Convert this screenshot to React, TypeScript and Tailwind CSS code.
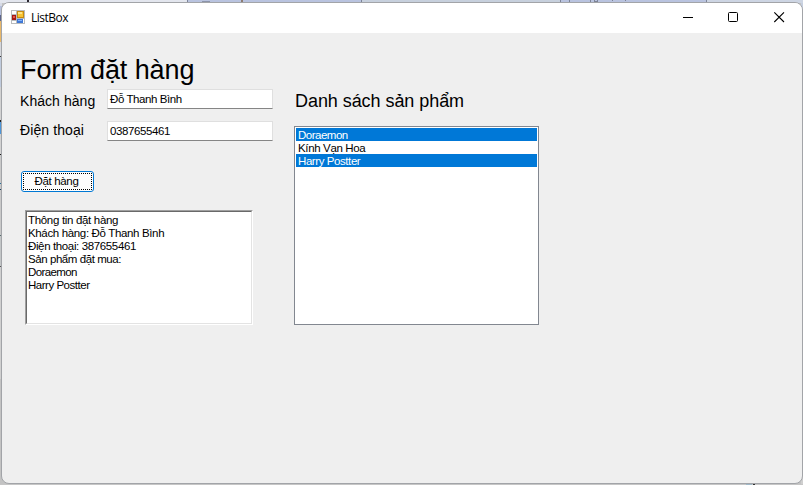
import React from "react";

const products = [
  { name: "Doraemon", selected: true, spacing: "tracking-[-0.5px]" },
  { name: "Kính Vạn Hoa", selected: false, spacing: "tracking-[-0.35px]" },
  { name: "Harry Postter", selected: true, spacing: "tracking-[-0.42px]" },
];

const orderLines = [
  { text: "Thông tin đặt hàng", spacing: "tracking-[-0.32px]" },
  { text: "Khách hàng: Đỗ Thanh Bình", spacing: "tracking-[-0.35px]" },
  { text: "Điện thoại: 387655461", spacing: "tracking-[-0.37px]" },
  { text: "Sản phẩm đặt mua:", spacing: "tracking-[-0.43px]" },
  { text: "Doraemon", spacing: "tracking-[-0.6px]" },
  { text: "Harry Postter", spacing: "tracking-[-0.48px]" },
];

function AppIcon() {
  return (
    <svg width="14" height="14" viewBox="0 0 14 14" shapeRendering="crispEdges">
      <path d="M0 0h14v14H0z" fill="#b9bbbd" />
      <path d="M1 1h4v3H1zM1 11h4v2H1zM12 9h1v4h-1z" fill="#fff" />
      <path d="M1 5h4v5H1z" fill="#a51b16" />
      <path d="M2 6h2v2H2z" fill="#e4574a" />
      <path d="M6 1h7v7H6z" fill="#c58a10" />
      <path d="M7 2h5v5H7z" fill="#f8c432" />
      <path d="M7 2h4v2H7z" fill="#ffe488" />
      <path d="M6 9h6v4H6z" fill="#3f78d6" />
      <path d="M7 10h4v1H7z" fill="#83b1fa" />
    </svg>
  );
}

function Backdrop() {
  return (
    <div className="flex h-full flex-col bg-[#c3c3c3]">
      <div className="flex h-[3px] shrink-0 bg-[#b9c3df]">
        <div className="h-full w-[187px] bg-[#e3e6ee] pl-[27px]">
          <div className="h-[2px] w-[2px] bg-[#28242e]" />
        </div>
        <div className="h-full w-px bg-[#7d8497]" />
        <div className="h-full w-[14px]" />
        <div className="h-[2px] w-[8px] border-b border-[#8c94aa]" />
        <div className="ml-[31px] h-full w-[2px] bg-[#8d7c72]" />
        <div className="ml-[118px] h-full w-px bg-[#7d8497]" />
        <div className="h-full w-[198px] bg-[#c7d0dd]" />
        <div className="h-full w-px bg-[#7d8497]" />
        <div className="ml-[8px] h-full w-px bg-[#7d8497]" />
        <div className="ml-[20px] h-full w-px bg-[#7d8497]" />
        <div className="ml-[3px] h-[2px] w-[4px] border border-t-0 border-[#7d8497]" />
        <div className="ml-[14px] h-px w-px bg-[#7d8497]" />
        <div className="ml-[12px] h-px w-px bg-[#7d8497]" />
        <div className="ml-[80px] h-full w-px bg-[#7d8497]" />
        <div className="h-full grow bg-[#cdd5e3]" />
      </div>
      <div className="flex grow justify-between">
        <div className="flex w-[2px] flex-col">
          <div className="h-[3px] bg-[#d7dbe6]" />
          <div className="h-[9px] bg-[#b6c0dd]" />
          <div className="h-[6px] bg-[#5c648c]" />
          <div className="h-[21px] bg-[#e7b769]" />
          <div className="h-[14px] bg-[#d5d7dc]" />
          <div className="h-px bg-[#3d3d3d]" />
          <div className="h-[30px] bg-[#c0cbdd]" />
          <div className="h-[33px] bg-[#d2d2d2]" />
          <div className="h-[2px] bg-[#202020]" />
          <div className="h-[12px] bg-[#4e96d9]" />
          <div className="h-[20px] bg-[#d2d2d2]" />
          <div className="h-px bg-[#181818]" />
          <div className="h-[28px] bg-[#c9c9c9]" />
          <div className="h-px bg-[#2d719b]" />
          <div className="h-[5px] bg-[#c9c9c9]" />
          <div className="h-px bg-[#224461]" />
          <div className="h-[45px] bg-[#c9c9c9]" />
          <div className="h-px bg-[#576c6d]" />
          <div className="h-[30px] bg-[#c3c6c7]" />
          <div className="h-px bg-[#555]" />
          <div className="h-[112px] bg-[#d0d0d0]" />
        </div>
        <div className="flex w-[2px] flex-col">
          <div className="h-[12px] bg-[#c6cfdf]" />
          <div className="h-[25px] bg-[#5d6792]" />
          <div className="h-[2px] bg-[#d9ad62]" />
          <div className="grow bg-[#cfcfcf]" />
        </div>
      </div>
      <div className="flex h-[1px] shrink-0 bg-[#c6c6c6] pl-[746px]">
        <div className="h-px w-[6px] bg-[#9fb8c8]" />
        <div className="ml-[1px] h-px w-[2px] bg-[#333]" />
      </div>
    </div>
  );
}

function TitleBar() {
  return (
    <header className="flex h-[30px] shrink-0 items-start bg-white pl-[9px]">
      <div className="mt-[7px]">
        <AppIcon />
      </div>
      <h1 className="ml-[6px] mt-[6px] font-['Open_Sans',sans-serif] text-[12px] leading-[17px] tracking-[-0.5px]">
        ListBox
      </h1>
      <svg className="ml-auto mr-[17px] mt-[8px]" width="102" height="12" viewBox="0 0 102 12" fill="none" stroke="#000">
        <path d="M0 6.5h10" />
        <rect x="45.5" y="1.5" width="9" height="9" rx="1" />
        <path d="M91.3 1.3l9.7 9.7M101 1.3L91.3 11" strokeWidth="1.1" />
      </svg>
    </header>
  );
}

function Field({ value, spacing }: { value: string; spacing: string }) {
  return (
    <div className="h-[20px] w-[166px] border border-[#dfdfdf] border-b-[#858585] bg-white pl-[2px] text-[11.5px] leading-[19px]">
      <span className={spacing}>{value}</span>
    </div>
  );
}

export default function App() {
  return (
    <main className="relative h-[485px] w-[803px] overflow-hidden whitespace-nowrap font-['Liberation_Sans',Arial,sans-serif] text-black">
      <Backdrop />
      <section className="absolute left-[1px] top-[2px] flex h-[482px] w-[802px] flex-col overflow-hidden rounded-[8px] border border-[#a2a4a8] bg-[#efefef]">
        <TitleBar />
        <div className="flex pl-[18px]">
          <div className="w-[275px]">
            <h2 className="pt-[21px] text-[27px] leading-[32px]">
              <span className="tracking-[-0.1px]">Form đặt hàng</span>
            </h2>
            <div className="mt-[3px] flex">
              <div className="w-[87px] pt-[3px] text-[14px] leading-[18px]">
                <span className="tracking-[0.05px]">Khách hàng</span>
              </div>
              <Field value="Đỗ Thanh Bình" spacing="tracking-[-0.42px]" />
            </div>
            <div className="mt-[11px] flex">
              <div className="w-[87px] text-[14px] leading-[18px]">
                <span className="tracking-[0.1px]">Điện thoại</span>
              </div>
              <Field value="0387655461" spacing="tracking-[-0.4px]" />
            </div>
            <button className="ml-[1px] mt-[30px] flex h-[21px] w-[73px] rounded-[3px] border border-[#0078d4] bg-[#fdfdfd] p-px text-[11.5px]">
              <span className="flex h-full w-full items-center justify-center border border-dotted border-black pr-[2px] leading-[15px]">
                <span className="tracking-[-0.35px]">Đặt hàng</span>
              </span>
            </button>
            <div className="ml-[5px] mt-[18px] h-[115px] w-[228px] border border-b-white border-l-[#a0a0a0] border-r-white border-t-[#a0a0a0]">
              <div className="h-full border border-b-[#e3e3e3] border-l-[#696969] border-r-[#e3e3e3] border-t-[#696969] bg-white pl-px pt-[2px] text-[11.5px] leading-[13px]">
                {orderLines.map((l) => (
                  <div key={l.text}>
                    <span className={l.spacing}>{l.text}</span>
                  </div>
                ))}
              </div>
            </div>
          </div>
          <div className="pt-[58px]">
            <h3 className="text-[18px] leading-[21px]">
              <span className="tracking-[-0.06px]">Danh sách sản phẩm</span>
            </h3>
            <ul className="-ml-px mt-[14px] h-[199px] w-[245px] border border-[#828790] bg-white p-px text-[11.5px] leading-[15px]">
              {products.map((p) => (
                <li key={p.name} className={p.selected ? "h-[13px] bg-[#0078d7] pl-[2px] text-white" : "h-[13px] pl-[2px]"}>
                  <span className={p.spacing}>{p.name}</span>
                </li>
              ))}
            </ul>
          </div>
        </div>
      </section>
    </main>
  );
}
